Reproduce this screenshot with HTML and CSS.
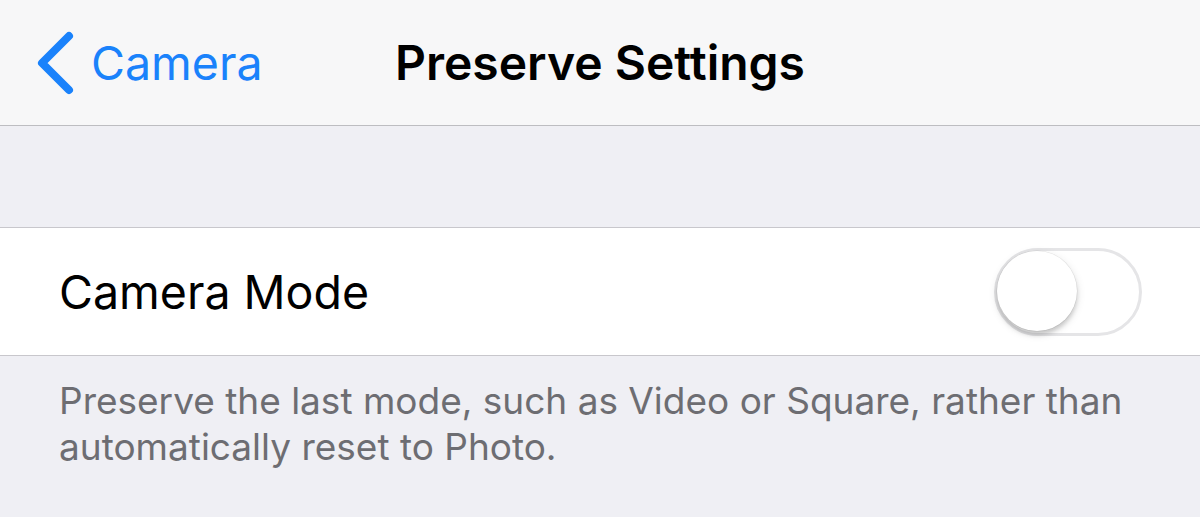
FILE: index.html
```html
<!DOCTYPE html>
<html>
<head>
<meta charset="utf-8">
<link rel="stylesheet" href="styles.css">
</head>
<body>
<div class="page">
  <header class="nav">
    <div class="back">
      <svg class="chev" width="40" height="64" viewBox="0 0 40 64"><path d="M33 5 L6 32 L33 59" fill="none" stroke="#1a82fb" stroke-width="8" stroke-linecap="round" stroke-linejoin="round"/></svg>
      <span class="back-label">Camera</span>
    </div>
    <h1 class="title">Preserve Settings</h1>
  </header>
  <div class="spacer"></div>
  <div class="row">
    <span class="row-label">Camera Mode</span>
    <div class="toggle"><div class="knob"></div></div>
  </div>
  <p class="footer">Preserve the last mode, such as Video or Square, rather than automatically reset to Photo.</p>
</div>
</body>
</html>
```
FILE: styles.css
```css
html, body { margin: 0; padding: 0; }
body {
  background: #efeff4;
  font-family: Inter, "Noto Sans", sans-serif;
  width: 1200px;
  height: 517px;
  overflow: hidden;
}
.page { display: flex; flex-direction: column; }
.nav {
  height: 125px;
  background: #f7f7f8;
  border-bottom: 1px solid #bdbdc1;
  position: relative;
  display: flex;
  align-items: center;
  box-sizing: content-box;
}
.back {
  display: flex;
  align-items: center;
  padding-left: 36px;
  gap: 15px;
}
.chev { display: block; }
.back-label {
  color: #1a82fb;
  font-size: 46.5px;
}
.title {
  position: absolute;
  left: 0; right: 0; top: 0; bottom: 0;
  margin: 0;
  display: flex;
  align-items: center;
  justify-content: center;
  font-size: 48px;
  font-weight: 600;
  color: #000;
  pointer-events: none;
}
.spacer { height: 101px; }
.row {
  height: 127px;
  background: #fff;
  border-top: 1px solid #c8c7cc;
  border-bottom: 1px solid #c8c7cc;
  display: flex;
  align-items: center;
  justify-content: space-between;
  padding: 0 58px 0 59px;
}
.row-label { font-size: 46.5px; color: #000; }
.toggle {
  width: 142px;
  height: 82px;
  border: 3px solid #e5e5e7;
  border-radius: 44px;
  background: #fff;
  position: relative;
}
.knob {
  position: absolute;
  left: 0; top: 0;
  width: 80px; height: 80px;
  border-radius: 50%;
  background: #fff;
  box-shadow: 0 4px 4px rgba(0,0,0,0.15), 0 3px 10px rgba(0,0,0,0.12), 0 0 0 0.5px rgba(0,0,0,0.08);
}
.footer {
  margin: 0;
  padding: 22px 60px 0 59px;
  font-size: 37px;
  line-height: 46px;
  color: #6d6d72;
}
```
